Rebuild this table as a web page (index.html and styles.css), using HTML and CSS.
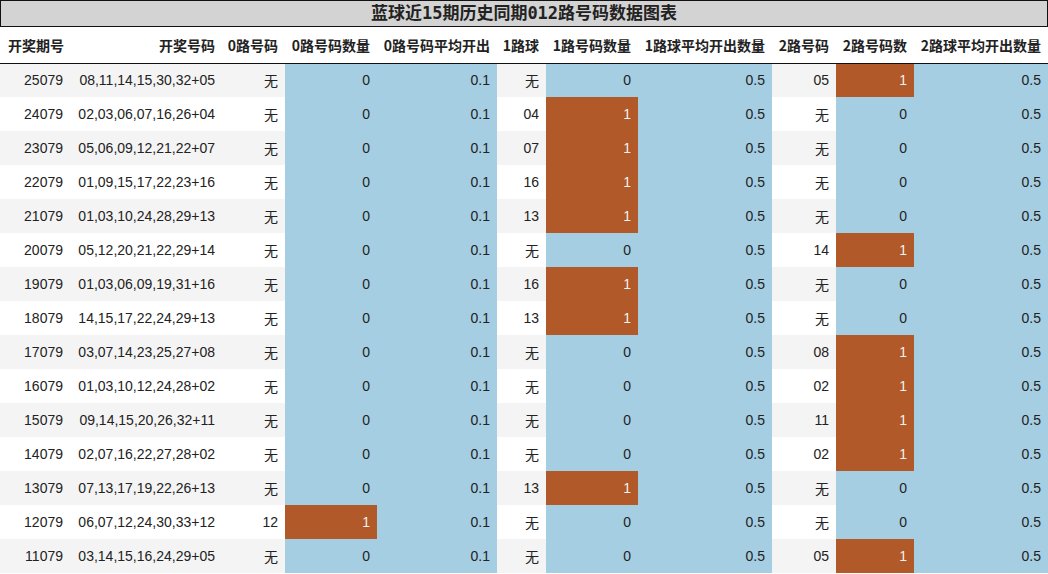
FILE: index.html
```html
<!DOCTYPE html>
<html lang="zh">
<head>
<meta charset="utf-8">
<title>蓝球近15期历史同期012路号码数据图表</title>
<link rel="stylesheet" href="styles.css">
</head>
<body>
<div class="title">蓝球近15期历史同期012路号码数据图表</div>
<table class="grid">
<colgroup>
<col class="c1"><col class="c2"><col class="c3"><col class="c4"><col class="c5"><col class="c6"><col class="c7"><col class="c8"><col class="c9"><col class="c10"><col class="c11">
</colgroup>
<thead>
<tr><th>开奖期号</th><th>开奖号码</th><th>0路号码</th><th>0路号码数量</th><th>0路号码平均开出</th><th>1路球</th><th>1路号码数量</th><th>1路球平均开出数量</th><th>2路号码</th><th>2路号码数</th><th>2路球平均开出数量</th></tr>
</thead>
<tbody>
<tr><td>25079</td><td>08,11,14,15,30,32+05</td><td>无</td><td class="b">0</td><td class="b">0.1</td><td>无</td><td class="b">0</td><td class="b">0.5</td><td>05</td><td class="o">1</td><td class="b">0.5</td></tr>
<tr><td>24079</td><td>02,03,06,07,16,26+04</td><td>无</td><td class="b">0</td><td class="b">0.1</td><td>04</td><td class="o">1</td><td class="b">0.5</td><td>无</td><td class="b">0</td><td class="b">0.5</td></tr>
<tr><td>23079</td><td>05,06,09,12,21,22+07</td><td>无</td><td class="b">0</td><td class="b">0.1</td><td>07</td><td class="o">1</td><td class="b">0.5</td><td>无</td><td class="b">0</td><td class="b">0.5</td></tr>
<tr><td>22079</td><td>01,09,15,17,22,23+16</td><td>无</td><td class="b">0</td><td class="b">0.1</td><td>16</td><td class="o">1</td><td class="b">0.5</td><td>无</td><td class="b">0</td><td class="b">0.5</td></tr>
<tr><td>21079</td><td>01,03,10,24,28,29+13</td><td>无</td><td class="b">0</td><td class="b">0.1</td><td>13</td><td class="o">1</td><td class="b">0.5</td><td>无</td><td class="b">0</td><td class="b">0.5</td></tr>
<tr><td>20079</td><td>05,12,20,21,22,29+14</td><td>无</td><td class="b">0</td><td class="b">0.1</td><td>无</td><td class="b">0</td><td class="b">0.5</td><td>14</td><td class="o">1</td><td class="b">0.5</td></tr>
<tr><td>19079</td><td>01,03,06,09,19,31+16</td><td>无</td><td class="b">0</td><td class="b">0.1</td><td>16</td><td class="o">1</td><td class="b">0.5</td><td>无</td><td class="b">0</td><td class="b">0.5</td></tr>
<tr><td>18079</td><td>14,15,17,22,24,29+13</td><td>无</td><td class="b">0</td><td class="b">0.1</td><td>13</td><td class="o">1</td><td class="b">0.5</td><td>无</td><td class="b">0</td><td class="b">0.5</td></tr>
<tr><td>17079</td><td>03,07,14,23,25,27+08</td><td>无</td><td class="b">0</td><td class="b">0.1</td><td>无</td><td class="b">0</td><td class="b">0.5</td><td>08</td><td class="o">1</td><td class="b">0.5</td></tr>
<tr><td>16079</td><td>01,03,10,12,24,28+02</td><td>无</td><td class="b">0</td><td class="b">0.1</td><td>无</td><td class="b">0</td><td class="b">0.5</td><td>02</td><td class="o">1</td><td class="b">0.5</td></tr>
<tr><td>15079</td><td>09,14,15,20,26,32+11</td><td>无</td><td class="b">0</td><td class="b">0.1</td><td>无</td><td class="b">0</td><td class="b">0.5</td><td>11</td><td class="o">1</td><td class="b">0.5</td></tr>
<tr><td>14079</td><td>02,07,16,22,27,28+02</td><td>无</td><td class="b">0</td><td class="b">0.1</td><td>无</td><td class="b">0</td><td class="b">0.5</td><td>02</td><td class="o">1</td><td class="b">0.5</td></tr>
<tr><td>13079</td><td>07,13,17,19,22,26+13</td><td>无</td><td class="b">0</td><td class="b">0.1</td><td>13</td><td class="o">1</td><td class="b">0.5</td><td>无</td><td class="b">0</td><td class="b">0.5</td></tr>
<tr><td>12079</td><td>06,07,12,24,30,33+12</td><td>12</td><td class="o">1</td><td class="b">0.1</td><td>无</td><td class="b">0</td><td class="b">0.5</td><td>无</td><td class="b">0</td><td class="b">0.5</td></tr>
<tr><td>11079</td><td>03,14,15,16,24,29+05</td><td>无</td><td class="b">0</td><td class="b">0.1</td><td>无</td><td class="b">0</td><td class="b">0.5</td><td>05</td><td class="o">1</td><td class="b">0.5</td></tr>
</tbody>
</table>
</body>
</html>
```
FILE: styles.css
```css
html, body {
  margin: 0;
  padding: 0;
  background: #ffffff;
}
body {
  width: 1048px;
  color: #222222;
  font-family: "Liberation Sans", "Noto Sans CJK SC", sans-serif;
}
.title {
  box-sizing: border-box;
  height: 27px;
  border: 1px solid #111111;
  background: #d3d3d3;
  text-align: center;
  font-family: "DejaVu Sans Mono", "Noto Sans CJK SC", monospace;
  font-weight: bold;
  font-size: 17px;
  line-height: 25px;
  color: #222222;
}
.grid {
  width: 1048px;
  border-collapse: collapse;
  table-layout: fixed;
  border-spacing: 0;
}
.c1 { width: 70px; }
.c2 { width: 152px; }
.c3 { width: 63px; }
.c4 { width: 92px; }
.c5 { width: 120px; }
.c6 { width: 49px; }
.c7 { width: 92px; }
.c8 { width: 134px; }
.c9 { width: 64px; }
.c10 { width: 78px; }
.c11 { width: 134px; }
.grid th {
  height: 36px;
  padding: 0 7px 0 0;
  text-align: right;
  font-family: "Noto Sans CJK SC", sans-serif;
  font-weight: bold;
  font-size: 14px;
  color: #222222;
  border-bottom: 1px solid #111111;
  white-space: nowrap;
  box-sizing: border-box;
}
.grid th:first-child {
  text-align: left;
  padding-left: 8px;
}
.grid td {
  height: 34px;
  padding: 0 7px 0 0;
  text-align: right;
  font-size: 14px;
  white-space: nowrap;
  box-sizing: border-box;
}
.grid tbody tr:nth-child(odd) {
  background: #f4f4f4;
}
.grid tbody tr:nth-child(even) {
  background: #ffffff;
}
.grid td.b {
  background: #a6cee3;
}
.grid td.o {
  background: #b15928;
  color: #f2f2f2;
}
```
